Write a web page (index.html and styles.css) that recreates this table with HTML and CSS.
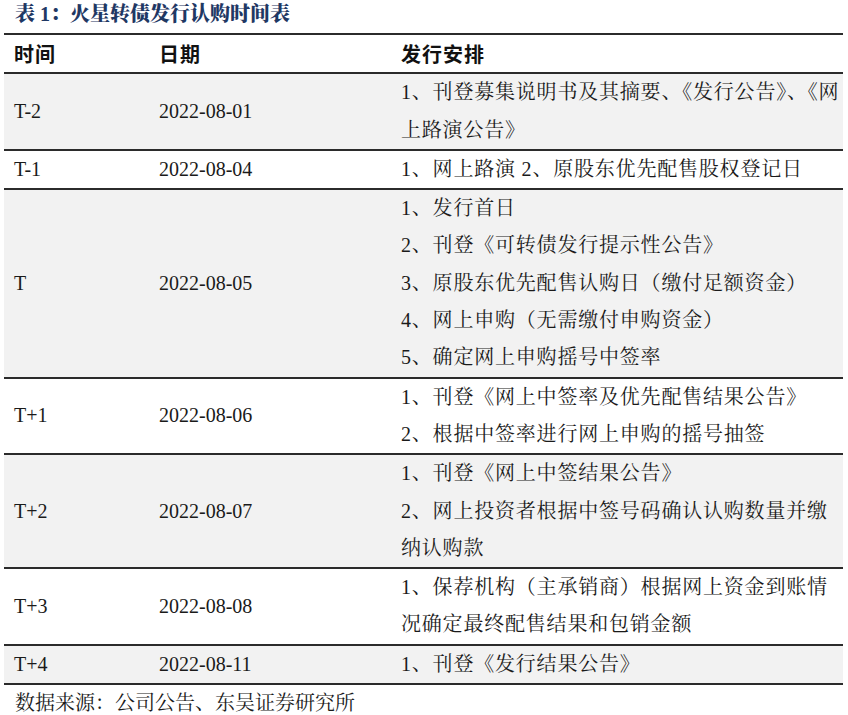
FILE: index.html
```html
<!DOCTYPE html>
<html lang="zh-CN">
<head>
<meta charset="utf-8">
<title>火星转债发行认购时间表</title>
<link rel="stylesheet" href="styles.css">
</head>
<body>
<div class="page">
  <div class="title"><span class="lat">表 1</span>：火星转债发行认购时间表</div>
  <table class="sched">
    <colgroup>
      <col class="c1"><col class="c2"><col class="c3">
    </colgroup>
    <thead>
      <tr><th>时间</th><th>日期</th><th>发行安排</th></tr>
    </thead>
    <tbody>
      <tr class="gray">
        <td class="num">T-2</td><td class="num">2022-08-01</td>
        <td class="plan"><div>1、刊登募集说明书及其摘要、《发行公告》、《网</div><div>上路演公告》</div></td>
      </tr>
      <tr>
        <td class="num">T-1</td><td class="num">2022-08-04</td>
        <td class="plan"><div>1、网上路演 2、原股东优先配售股权登记日</div></td>
      </tr>
      <tr class="gray">
        <td class="num">T</td><td class="num">2022-08-05</td>
        <td class="plan"><div>1、发行首日</div><div>2、刊登《可转债发行提示性公告》</div><div>3、原股东优先配售认购日（缴付足额资金）</div><div>4、网上申购（无需缴付申购资金）</div><div>5、确定网上申购摇号中签率</div></td>
      </tr>
      <tr>
        <td class="num">T+1</td><td class="num">2022-08-06</td>
        <td class="plan"><div>1、刊登《网上中签率及优先配售结果公告》</div><div>2、根据中签率进行网上申购的摇号抽签</div></td>
      </tr>
      <tr class="gray">
        <td class="num">T+2</td><td class="num">2022-08-07</td>
        <td class="plan"><div>1、刊登《网上中签结果公告》</div><div>2、网上投资者根据中签号码确认认购数量并缴</div><div>纳认购款</div></td>
      </tr>
      <tr>
        <td class="num">T+3</td><td class="num">2022-08-08</td>
        <td class="plan"><div>1、保荐机构（主承销商）根据网上资金到账情</div><div>况确定最终配售结果和包销金额</div></td>
      </tr>
      <tr class="gray">
        <td class="num">T+4</td><td class="num">2022-08-11</td>
        <td class="plan"><div>1、刊登《发行结果公告》</div></td>
      </tr>
    </tbody>
  </table>
  <div class="source">数据来源：公司公告、东吴证券研究所</div>
</div>
</body>
</html>
```

FILE: styles.css
```css
html, body {
  margin: 0;
  padding: 0;
  background: #ffffff;
}

body {
  font-family: "Liberation Serif", "Noto Serif CJK SC", "Noto Sans CJK SC", serif;
  color: #1a1a1a;
}

.page {
  width: 839px;
  padding-left: 4px;
}

.title {
  font-family: "Liberation Serif", "Noto Serif CJK SC", "Noto Sans CJK SC", serif;
  font-weight: 900;
  font-size: 20px;
  line-height: 28px;
  color: #1f3864;
  padding-left: 11px;
  margin-bottom: 5px;
  white-space: nowrap;
}

.sched {
  width: 839px;
  border-collapse: separate;
  border-spacing: 0;
  table-layout: fixed;
  border-top: 2px solid #2b2b2b;
}

.c1 { width: 145px; }
.c2 { width: 242px; }
.c3 { width: 452px; }

.sched th,
.sched td {
  padding: 0 0 0 10px;
  border-bottom: 2px solid #2b2b2b;
  font-size: 20px;
  line-height: 37.3px;
  text-align: left;
  vertical-align: middle;
  white-space: nowrap;
}

.sched th {
  font-family: "Noto Sans CJK SC", sans-serif;
  font-weight: 700;
  letter-spacing: 1px;
  color: #111;
}

.sched tr.gray td {
  background: #f2f2f2;
}

.num {
  font-family: "Liberation Serif", serif;
  color: #1a1a1a;
}

.plan {
  letter-spacing: 0.8px;
}

.source {
  font-size: 20px;
  line-height: 36px;
  padding-left: 11px;
  white-space: nowrap;
}
```
